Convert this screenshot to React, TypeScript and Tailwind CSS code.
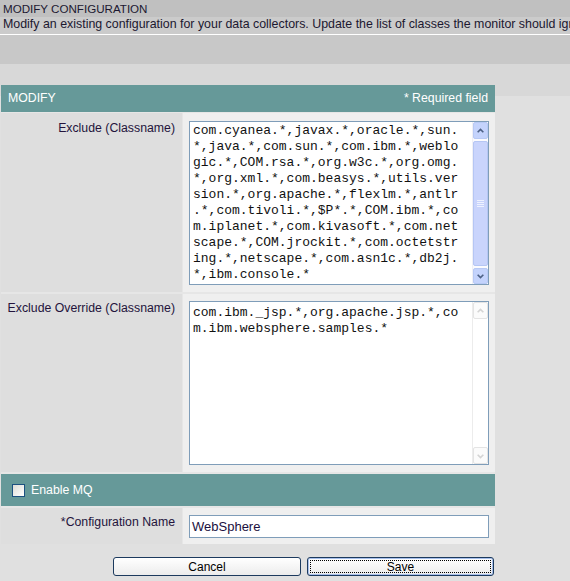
import React from "react";

const ex1 = [
  "com.cyanea.*,javax.*,oracle.*,sun.",
  "*,java.*,com.sun.*,com.ibm.*,weblo",
  "gic.*,COM.rsa.*,org.w3c.*,org.omg.",
  "*,org.xml.*,com.beasys.*,utils.ver",
  "sion.*,org.apache.*,flexlm.*,antlr",
  ".*,com.tivoli.*,$P*.*,COM.ibm.*,co",
  "m.iplanet.*,com.kivasoft.*,com.net",
  "scape.*,COM.jrockit.*,com.octetstr",
  "ing.*,netscape.*,com.asn1c.*,db2j.",
  "*,ibm.console.*",
];
const ex2 = ["com.ibm._jsp.*,org.apache.jsp.*,co", "m.ibm.websphere.samples.*"];

function Arrow({ up, color }: { up: boolean; color: string }) {
  return (
    <svg width="16" height="16" viewBox="0 0 16 16">
      <path
        d={up ? "M4.5 9.5 L8 6 L11.5 9.5" : "M4.5 6.5 L8 10 L11.5 6.5"}
        fill="none"
        stroke={color}
        strokeWidth="2"
      />
    </svg>
  );
}

function ScrollEnabled() {
  return (
    <div className="w-[16px] flex flex-col bg-[#fbfbfe] border-l border-[#f0f0f6]">
      <div className="h-[17px] rounded-[2px] bg-[#c4d3fc] border border-[#b7c9f5] flex items-center justify-center">
        <Arrow up color="#4d6185" />
      </div>
      <div className="flex-1 flex flex-col py-[2px]">
        <div className="flex-1 rounded-[2px] bg-[#c9d4fc] border border-[#b5c6f4] flex items-center justify-center">
          <div className="flex flex-col gap-[1px]">
            <div className="w-[7px] h-px bg-[#eef2ff]" />
            <div className="w-[7px] h-px bg-[#eef2ff]" />
            <div className="w-[7px] h-px bg-[#eef2ff]" />
            <div className="w-[7px] h-px bg-[#eef2ff]" />
          </div>
        </div>
      </div>
      <div className="h-[16px] rounded-[2px] bg-[#c4d3fc] border border-[#b7c9f5] flex items-center justify-center">
        <Arrow up={false} color="#4d6185" />
      </div>
    </div>
  );
}

function ScrollDisabled() {
  return (
    <div className="w-[16px] flex flex-col justify-between bg-white border-l border-[#ececec]">
      <div className="h-[17px] rounded-[2px] bg-[#fbfbfb] border border-[#e4e4e4] flex items-center justify-center">
        <Arrow up color="#d4d4d4" />
      </div>
      <div className="h-[17px] rounded-[2px] bg-[#fbfbfb] border border-[#e4e4e4] flex items-center justify-center">
        <Arrow up={false} color="#d4d4d4" />
      </div>
    </div>
  );
}

function Area({ lines, enabled, pt }: { lines: string[]; enabled: boolean; pt: string }) {
  return (
    <div className="w-[300px] h-[164px] border border-[#7f9db9] bg-white flex">
      <div
        className={`flex-1 pl-[3px] ${pt} font-['Liberation_Mono','Courier_New',monospace] text-[13px] leading-[16px] text-[#111]`}
      >
        {lines.map((l, i) => (
          <div key={i} className="whitespace-pre">
            {l}
          </div>
        ))}
      </div>
      {enabled ? <ScrollEnabled /> : <ScrollDisabled />}
    </div>
  );
}

export default function App() {
  return (
    <div className="w-[570px] h-[581px] overflow-hidden bg-[#e0e0e0] font-['Liberation_Sans',Arial,sans-serif] text-[12px] text-[#24143c]">
      <div className="h-[17px] bg-[#c0c0c0] pl-[3px] leading-[17px] text-[11.6px] text-[#1c1830]">MODIFY CONFIGURATION</div>
      <div className="h-[17px] bg-[#cbcbcb] pl-[3px] leading-[15px] text-[12.4px] whitespace-nowrap overflow-hidden text-[#1c1830]">
        Modify an existing configuration for your data collectors. Update the list of classes the monitor should ignore.
      </div>
      <div className="h-px bg-white" />
      <div className="h-[29px] bg-[#c8c8c8]" />
      <div className="pt-[21px] bg-[linear-gradient(#d8d8d8_0_32px,#e0e0e0_32px)]">
        <div className="ml-[1px] w-[494px] bg-[#e6e6e6] flex flex-col">
          <div className="h-[27px] bg-[#669999] text-white flex items-center justify-between px-[7px] text-[12.3px]">
            <span>MODIFY</span>
            <span>* Required field</span>
          </div>
          <div className="mt-[1px] flex gap-[1px] h-[179px]">
            <div className="w-[181px] bg-[#dedede] text-right pr-[7px] pt-[8px] leading-[15px] text-[12.3px]">
              Exclude (Classname)
            </div>
            <div className="flex-1 bg-[#efefef] pl-[6px] pt-[8px]">
              <Area lines={ex1} enabled pt="pt-[1px]" />
            </div>
          </div>
          <div className="mt-[2px] flex gap-[1px] h-[178px]">
            <div className="w-[181px] bg-[#dedede] text-right pr-[7px] pt-[7px] leading-[15px] text-[12.3px]">
              Exclude Override (Classname)
            </div>
            <div className="flex-1 bg-[#efefef] pl-[6px] pt-[7px]">
              <Area lines={ex2} enabled={false} pt="pt-[3px]" />
            </div>
          </div>
          <div className="mt-[2px] h-[32px] bg-[#669999] flex items-center pl-[11px] text-white text-[12.3px]">
            <div className="w-[13px] h-[13px] border border-[#1c5180] bg-[linear-gradient(135deg,#dcdcd6,#ffffff)]" />
            <span className="ml-[6px]">Enable MQ</span>
          </div>
          <div className="mt-[2px] flex gap-[1px] h-[36px]">
            <div className="w-[181px] bg-[#dedede] text-right pr-[7px] pt-[7px] leading-[15px] text-[12.3px]">
              *Configuration Name
            </div>
            <div className="flex-1 bg-[#efefef] pl-[6px] pt-[7px]">
              <div className="w-[300px] h-[23px] border border-[#7f9db9] bg-white pl-[2px] flex items-center text-[13px] text-[#1a1040]">
                WebSphere
              </div>
            </div>
          </div>
        </div>
        <div className="mt-[13px] flex pl-[113px] gap-[6px]">
          <div className="w-[188px] h-[19px] rounded-[3px] border border-[#1c3a5e] bg-[linear-gradient(#ffffff,#ececec)] flex items-center justify-center text-black">
            Cancel
          </div>
          <div className="w-[187px] h-[19px] rounded-[3px] border border-[#1c3a5e] bg-[linear-gradient(#ffffff,#ececec)] p-[2px] flex shadow-[inset_0_0_0_1px_#a8c0ec]">
            <div className="flex-1 border border-dotted border-black flex items-center justify-center text-black">
              Save
            </div>
          </div>
        </div>
      </div>
    </div>
  );
}
